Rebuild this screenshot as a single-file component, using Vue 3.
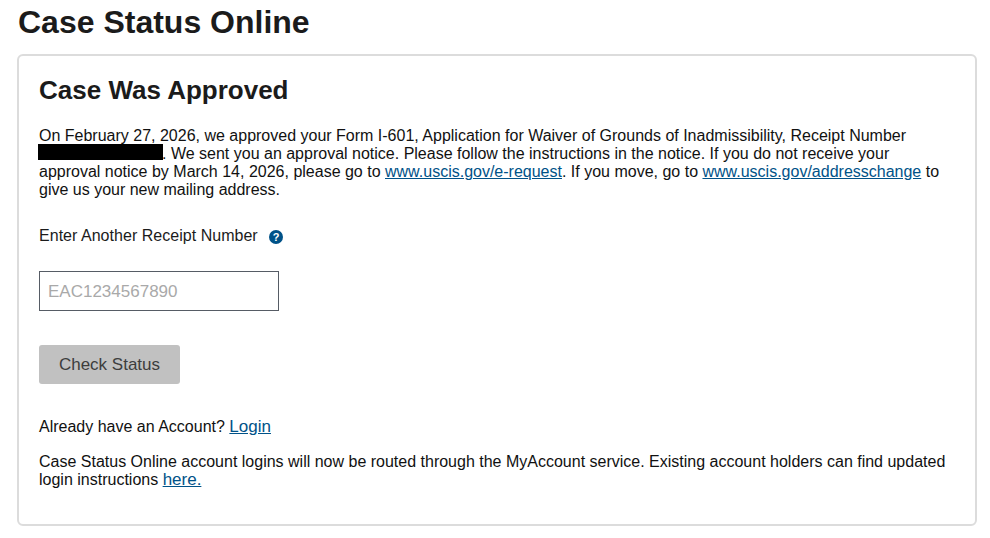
<script setup>
</script>

<template>
  <div class="page">
    <h1 class="title">Case Status Online</h1>
    <section class="card">
      <h2 class="status">Case Was Approved</h2>
      <p class="body">On February 27, 2026, we approved your Form I-601, Application for Waiver of Grounds of Inadmissibility, Receipt Number <span class="redact"></span>. We sent you an approval notice. Please follow the instructions in the notice. If you do not receive your approval notice by March 14, 2026, please go to <a href="#">www.uscis.gov/e-request</a>. If you move, go to <a href="#">www.uscis.gov/addresschange</a> to give us your new mailing address.</p>
      <div class="label-row">
        <label for="rn">Enter Another Receipt Number</label>
        <svg class="help" width="14" height="14" viewBox="0 0 14 14">
          <circle cx="7" cy="7" r="7" fill="#005288"/>
          <text x="7" y="11" text-anchor="middle" class="q">?</text>
        </svg>
      </div>
      <input id="rn" class="field" type="text" placeholder="EAC1234567890" />
      <button class="check" type="button">Check Status</button>
      <p class="acct">Already have an Account? <a class="big" href="#">Login</a></p>
      <p class="note">Case Status Online account logins will now be routed through the MyAccount service. Existing account holders can find updated login instructions <a class="big" href="#">here.</a></p>
    </section>
  </div>
</template>

<style>
html, body { margin: 0; background: #fff; }
</style>

<style scoped>
.page {
  width: 990px;
  height: 538px;
  overflow: hidden;
  box-sizing: border-box;
  padding: 3px 13px 0 17px;
  font-family: "Liberation Sans", Arial, sans-serif;
  color: #1b1b1b;
}
.title {
  margin: 0 0 13px 1px;
  font-size: 32px;
  line-height: 38px;
  font-weight: 700;
}
.card {
  box-sizing: border-box;
  height: 472px;
  border: 2px solid #dcdcdc;
  border-radius: 6px;
  padding: 18px 20px 0;
}
.status {
  margin: 0 0 21px;
  font-size: 26px;
  line-height: 32px;
  font-weight: 700;
}
.body {
  margin: 0 0 27px;
  width: 905px;
  font-size: 16px;
  line-height: 18px;
  color: #111;
}
.redact {
  display: inline-block;
  width: 125px;
  height: 16px;
  margin: -2px -1px 0 -1px;
  background: #000;
  vertical-align: -1px;
}
a { color: #005288; text-decoration: underline; }
.big { font-size: 17px; }
.label-row {
  display: flex;
  align-items: center;
  gap: 11px;
  height: 20px;
  font-size: 16px;
  letter-spacing: 0.03px;
}
.help { margin-top: 2px; }
.q { font: 700 11px "Liberation Sans", Arial, sans-serif; fill: #fff; }
.field {
  display: block;
  box-sizing: border-box;
  width: 240px;
  height: 40px;
  margin-top: 25px;
  padding: 2px 8px 0;
  border: 1px solid #565c65;
  border-radius: 0;
  outline: none;
  font: 17px "Liberation Sans", Arial, sans-serif;
}
.field::placeholder { color: #a9a9a9; opacity: 1; }
.check {
  display: block;
  width: 141px;
  height: 39px;
  margin-top: 34px;
  border: 0;
  border-radius: 3px;
  background: #c1c1c1;
  color: #3d3d3d;
  font: 17px "Liberation Sans", Arial, sans-serif;
}
.acct {
  margin: 33px 0 0;
  font-size: 16px;
  line-height: 20px;
  color: #111;
}
.note {
  margin: 16px 0 0;
  font-size: 16px;
  line-height: 18px;
  width: 920px;
  color: #111;
}
</style>
